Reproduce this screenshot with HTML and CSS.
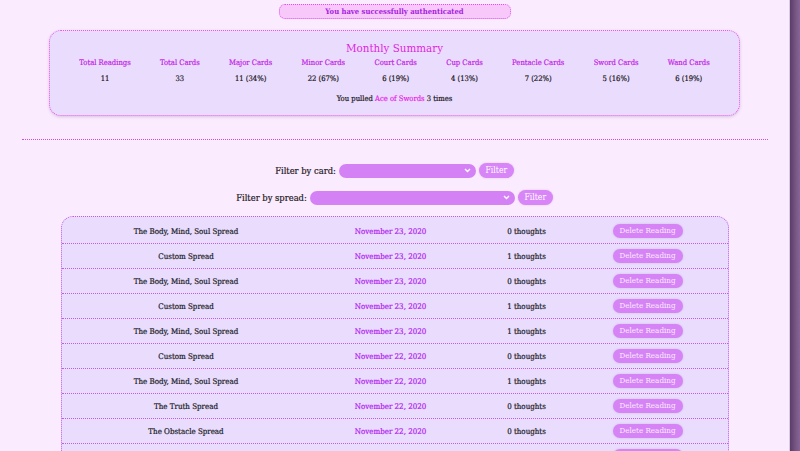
FILE: index.html
```html
<!DOCTYPE html>
<html>
<head>
<meta charset="utf-8">
<link rel="stylesheet" href="styles.css">
</head>
<body>
<div class="page">
  <main class="main">
    <div class="auth">You have successfully authenticated</div>
    <section class="summary">
      <h2 class="summary-title">Monthly Summary</h2>
      <div class="stats">
        <div class="stat"><div class="stat-h">Total Readings</div><div class="stat-v">11</div></div>
        <div class="stat"><div class="stat-h">Total Cards</div><div class="stat-v">33</div></div>
        <div class="stat"><div class="stat-h">Major Cards</div><div class="stat-v">11 (34%)</div></div>
        <div class="stat"><div class="stat-h">Minor Cards</div><div class="stat-v">22 (67%)</div></div>
        <div class="stat"><div class="stat-h">Court Cards</div><div class="stat-v">6 (19%)</div></div>
        <div class="stat"><div class="stat-h">Cup Cards</div><div class="stat-v">4 (13%)</div></div>
        <div class="stat"><div class="stat-h">Pentacle Cards</div><div class="stat-v">7 (22%)</div></div>
        <div class="stat"><div class="stat-h">Sword Cards</div><div class="stat-v">5 (16%)</div></div>
        <div class="stat"><div class="stat-h">Wand Cards</div><div class="stat-v">6 (19%)</div></div>
      </div>
      <p class="pulled">You pulled <span class="card-name">Ace of Swords</span> 3 times</p>
    </section>
    <hr class="divider">
    <form class="filter filter-first">
      <label class="filter-label">Filter by card:</label>
      <span class="select select-card"><svg width="7" height="5" viewBox="0 0 7 5"><path d="M1 1 L3.5 3.5 L6 1" fill="none" stroke="#fff" stroke-width="1.3"/></svg></span>
      <span class="btn">Filter</span>
    </form>
    <form class="filter filter-second">
      <label class="filter-label">Filter by spread:</label>
      <span class="select select-spread"><svg width="7" height="5" viewBox="0 0 7 5"><path d="M1 1 L3.5 3.5 L6 1" fill="none" stroke="#fff" stroke-width="1.3"/></svg></span>
      <span class="btn">Filter</span>
    </form>
    <section class="readings">
      <div class="row"><span class="c-name">The Body, Mind, Soul Spread</span><span class="c-date">November 23, 2020</span><span class="c-th">0 thoughts</span><span class="c-act"><span class="del">Delete Reading</span></span></div>
      <div class="row"><span class="c-name">Custom Spread</span><span class="c-date">November 23, 2020</span><span class="c-th">1 thoughts</span><span class="c-act"><span class="del">Delete Reading</span></span></div>
      <div class="row"><span class="c-name">The Body, Mind, Soul Spread</span><span class="c-date">November 23, 2020</span><span class="c-th">0 thoughts</span><span class="c-act"><span class="del">Delete Reading</span></span></div>
      <div class="row"><span class="c-name">Custom Spread</span><span class="c-date">November 23, 2020</span><span class="c-th">1 thoughts</span><span class="c-act"><span class="del">Delete Reading</span></span></div>
      <div class="row"><span class="c-name">The Body, Mind, Soul Spread</span><span class="c-date">November 23, 2020</span><span class="c-th">1 thoughts</span><span class="c-act"><span class="del">Delete Reading</span></span></div>
      <div class="row"><span class="c-name">Custom Spread</span><span class="c-date">November 22, 2020</span><span class="c-th">0 thoughts</span><span class="c-act"><span class="del">Delete Reading</span></span></div>
      <div class="row"><span class="c-name">The Body, Mind, Soul Spread</span><span class="c-date">November 22, 2020</span><span class="c-th">1 thoughts</span><span class="c-act"><span class="del">Delete Reading</span></span></div>
      <div class="row"><span class="c-name">The Truth Spread</span><span class="c-date">November 22, 2020</span><span class="c-th">0 thoughts</span><span class="c-act"><span class="del">Delete Reading</span></span></div>
      <div class="row"><span class="c-name">The Obstacle Spread</span><span class="c-date">November 22, 2020</span><span class="c-th">0 thoughts</span><span class="c-act"><span class="del">Delete Reading</span></span></div>
      <div class="row"><span class="c-name"></span><span class="c-date"></span><span class="c-th"></span><span class="c-act"><span class="del"></span></span></div>
    </section>
  </main>
  <aside class="side"></aside>
</div>
</body>
</html>
```

FILE: styles.css
```css
* { box-sizing: border-box; }
html, body { margin: 0; padding: 0; height: 100%; overflow: hidden; }
body {
  font-family: "DejaVu Serif", serif;
  font-stretch: condensed;
  color: #1e1a24;
  background: #fbebfe;
}
.page { display: flex; height: 451px; overflow: hidden; }
.main {
  width: 789px;
  flex-shrink: 0;
  background: #fbebfe;
  display: flex;
  flex-direction: column;
  align-items: center;
  padding-top: 4px;
}
.main > * { flex-shrink: 0; }
.side {
  width: 11px;
  flex-shrink: 0;
  border-left: 1px solid #d9c9e2;
  background: linear-gradient(90deg, #5a3b6a 0%, #74547f 50%, #86669a 100%);
}
.auth {
  width: 232px;
  height: 15px;
  background: #f8c8fa;
  border: 1px dotted #e24ff0;
  border-radius: 6px;
  color: #a61ee0;
  font-size: 7.6px;
  font-weight: bold;
  text-align: center;
  line-height: 13px;
}
.summary {
  margin-top: 11px;
  width: 691px;
  height: 86px;
  background: #e9dcfd;
  border: 1px dotted #ea55ee;
  border-radius: 12px;
  box-shadow: 0 1px 3px rgba(120, 80, 140, 0.25);
  display: flex;
  flex-direction: column;
  align-items: center;
}
.summary-title {
  margin: 10px 0 0;
  font-size: 11.5px;
  font-weight: normal;
  color: #e01fe0;
  line-height: 14px;
}
.stats {
  width: 100%;
  display: flex;
  justify-content: space-evenly;
  margin-top: 3px;
}
.stat { display: flex; flex-direction: column; align-items: center; }
.stat-h {
  font-size: 7.6px;
  color: #c524e6;
  line-height: 10px;
  -webkit-text-stroke: 0.2px currentColor;
}
.stat-v {
  font-size: 7.6px;
  color: #1e1a24;
  margin-top: 6px;
  line-height: 10px;
  -webkit-text-stroke: 0.2px currentColor;
}
.pulled {
  margin: 10px 0 0;
  font-size: 7.6px;
  line-height: 10px;
  -webkit-text-stroke: 0.2px currentColor;
}
.card-name { color: #e52ae6; }
.divider {
  margin: 23px 0 0;
  width: 746px;
  border: 0;
  border-top: 1px dotted #c84fe2;
  height: 0;
}
.filter {
  display: flex;
  align-items: center;
  gap: 3px;
  margin: 0;
}
.filter-first { margin-top: 23px; }
.filter-second { margin-top: 12px; }
.filter-label { font-size: 9.3px; color: #1e1a24; -webkit-text-stroke: 0.2px currentColor; }
.select {
  height: 14px;
  background: #d581f6;
  border-radius: 7px;
  display: flex;
  align-items: center;
  justify-content: flex-end;
  padding-right: 5px;
}
.select-card { width: 137px; }
.select-spread { width: 205px; }
.btn {
  height: 15px;
  width: 35px;
  background: #d785f7;
  border-radius: 8px;
  color: #fff;
  font-size: 8.6px;
  line-height: 15px;
  text-align: center;
  box-shadow: 0 0 2px rgba(150, 90, 180, 0.3);
}
.readings {
  margin-top: 11px;
  width: 668px;
  background: #e9dcfd;
  border: 1px dotted #c45ae8;
  border-radius: 12px 12px 0 0;
  padding-top: 2px;
}
.row {
  display: grid;
  grid-template-columns: 249px 160px 112px 130px 1fr;
  align-items: center;
  height: 25px;
  border-bottom: 1px dotted #c45ae8;
  font-size: 7.9px;
  text-align: center;
  -webkit-text-stroke: 0.2px currentColor;
}
.c-name { color: #201c28; }
.c-date { color: #b21ef0; }
.c-th { color: #201c28; }
.c-act { display: flex; justify-content: center; }
.del {
  display: inline-block;
  width: 70px;
  height: 14px;
  line-height: 14px;
  border-radius: 7px;
  background: #d683f6;
  color: #f7ecff;
  font-size: 8px;
  -webkit-text-stroke: 0;
  box-shadow: 0 0 2px rgba(150, 90, 180, 0.3);
}
```
